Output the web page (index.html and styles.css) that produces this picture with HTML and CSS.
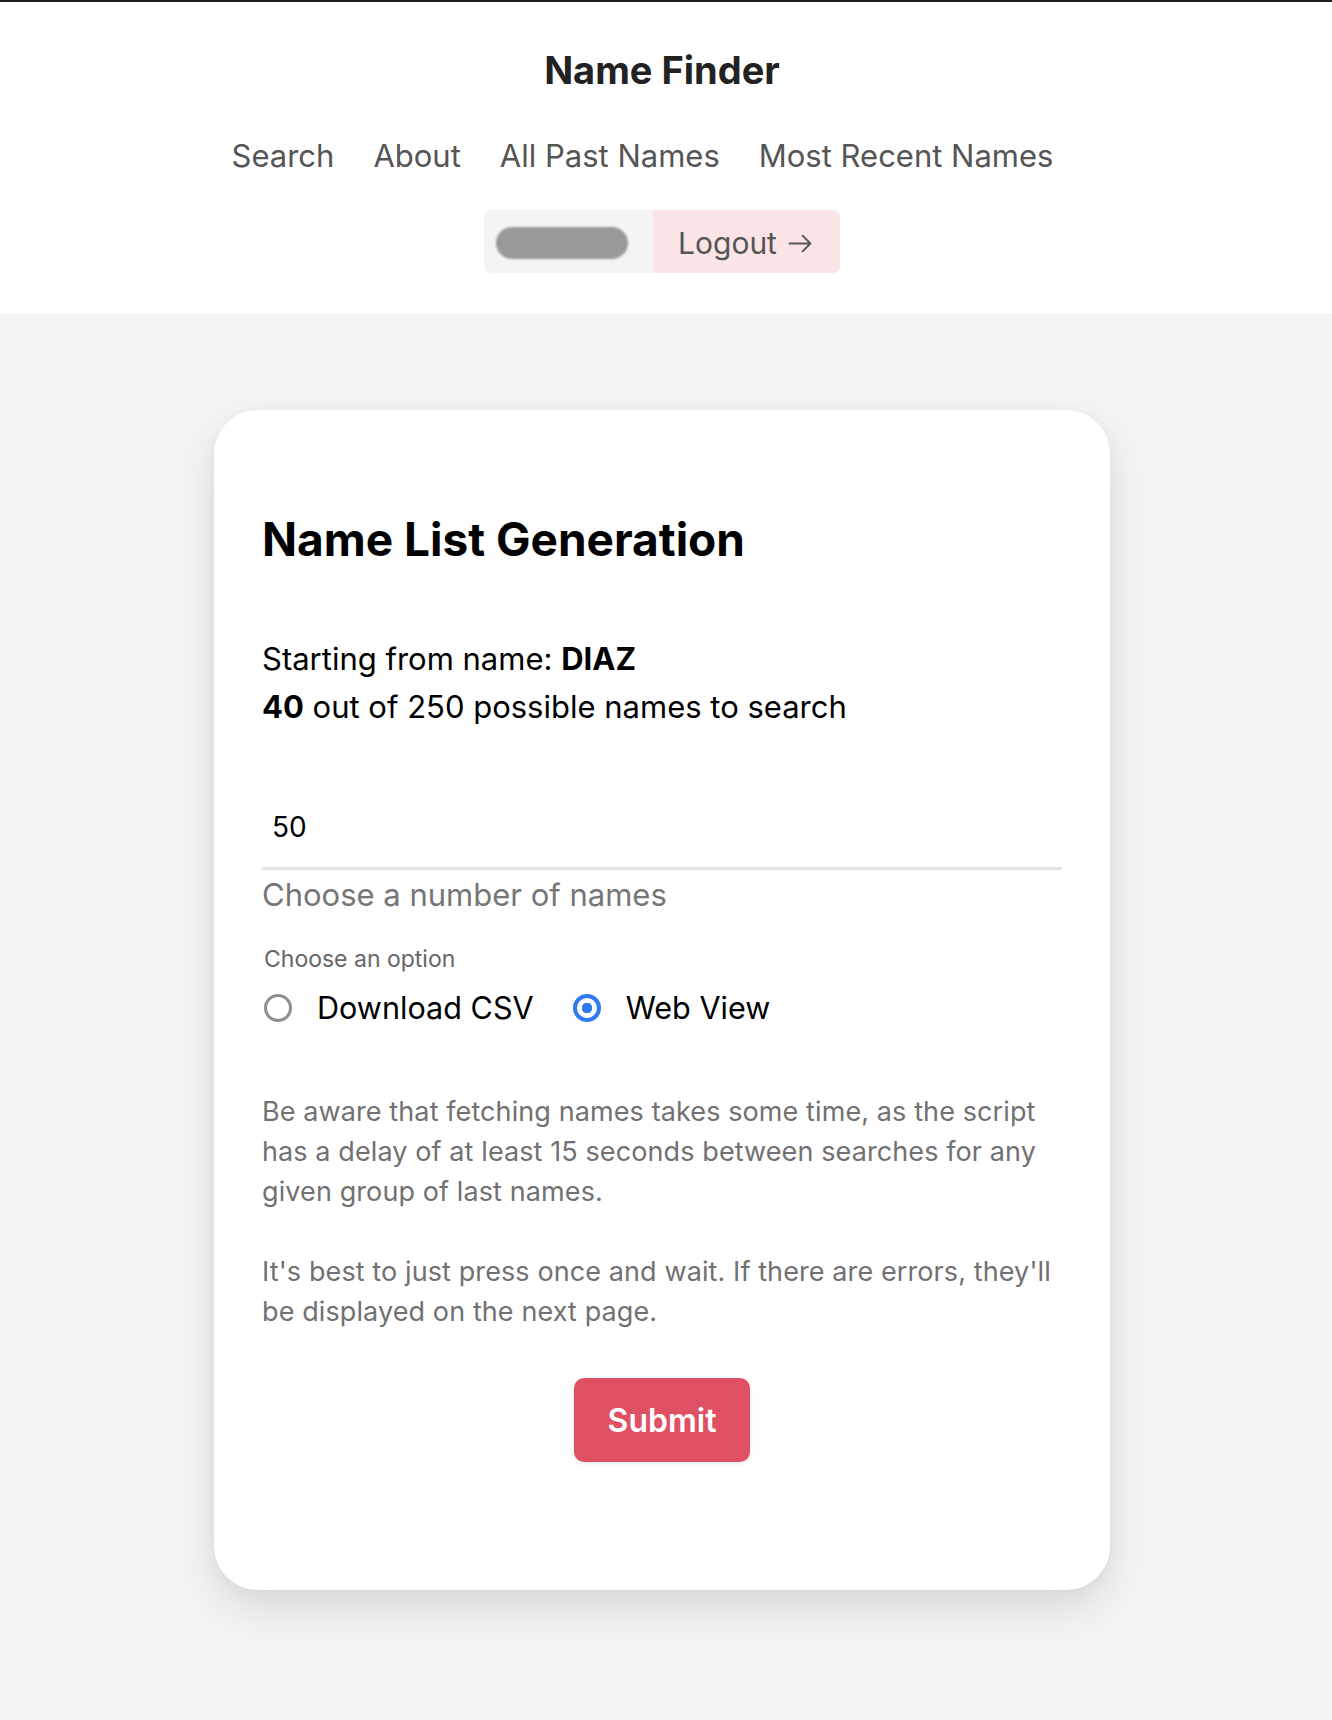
FILE: index.html
```html
<!DOCTYPE html>
<html lang="en">
<head>
<meta charset="utf-8">
<title>Name Finder</title>
<link rel="stylesheet" href="styles.css">
</head>
<body>
<header class="site-header">
  <h1 class="brand">Name Finder</h1>
  <nav class="nav">
    <a class="nav-link" href="#">Search</a>
    <a class="nav-link" href="#">About</a>
    <a class="nav-link" href="#">All Past Names</a>
    <a class="nav-link" href="#">Most Recent Names</a>
  </nav>
  <div class="account">
    <span class="user"><span class="user-name"></span></span>
    <a class="logout" href="#">Logout
      <svg class="logout-icon" viewBox="0 0 24 24" width="24" height="24" aria-hidden="true"><path d="M1.5 12h20M14 4.5l7.5 7.5-7.5 7.5" fill="none" stroke="#555" stroke-width="1.8" stroke-linecap="round" stroke-linejoin="round"/></svg>
    </a>
  </div>
</header>
<main class="main">
  <section class="card">
    <h2 class="card-title">Name List Generation</h2>
    <p class="stats">Starting from name: <strong>DIAZ</strong><br><strong>40</strong> out of 250 possible names to search</p>
    <div class="field">
      <input class="field-input" type="text" value="50" id="count">
      <label class="field-label" for="count">Choose a number of names</label>
    </div>
    <div class="options">
      <div class="options-legend">Choose an option</div>
      <div class="options-row">
        <label class="option"><input class="radio" type="radio" name="mode"><span>Download CSV</span></label>
        <label class="option"><input class="radio" type="radio" name="mode" checked><span>Web View</span></label>
      </div>
    </div>
    <p class="note note-first">Be aware that fetching names takes some time, as the script has a delay of at least 15 seconds between searches for any given group of last names.</p>
    <p class="note note-second">It's best to just press once and wait. If there are errors, they'll be displayed on the next page.</p>
    <div class="actions"><button class="submit" type="button">Submit</button></div>
  </section>
</main>
</body>
</html>
```

FILE: styles.css
```css
html, body {
  margin: 0;
  padding: 0;
}
body {
  background: #f4f4f4;
  font-family: Inter, "Noto Sans", "Liberation Sans", sans-serif;
  padding-right: 8px;
  min-height: 1720px;
  box-sizing: border-box;
}
.site-header {
  background: #fff;
  border-top: 2px solid #1f1f1f;
  padding: 45px 8px 41px 0;
  margin-right: -8px;
  display: flex;
  flex-direction: column;
  align-items: center;
}
.brand {
  margin: 0;
  font-size: 38px;
  line-height: 46px;
  font-weight: 700;
  color: #222;
}
.nav {
  display: flex;
  justify-content: center;
  margin-top: 44px;
}
.nav-link {
  font-size: 31px;
  line-height: 38px;
  color: #555;
  text-decoration: none;
  margin-right: 39px;
}
.account {
  display: flex;
  margin-top: 35px;
}
.user {
  background: #f4f4f4;
  border-radius: 7px 0 0 7px;
  padding: 17px 25px 14px 12px;
  display: flex;
}
.user-name {
  display: block;
  width: 132px;
  height: 32px;
  border-radius: 16px;
  background: #999;
  filter: blur(0.8px);
}
.logout {
  background: #fae4e6;
  border-radius: 0 7px 7px 0;
  padding: 15px 27px 12px 25px;
  font-size: 30px;
  line-height: 36px;
  color: #555;
  text-decoration: none;
  display: flex;
  align-items: center;
}
.logout-icon {
  margin-left: 11px;
  width: 25px;
  height: 25px;
  margin-top: 1px;
}
.main {
  padding-top: 96px;
  display: flex;
  justify-content: center;
}
.card {
  width: 896px;
  box-sizing: border-box;
  background: #fff;
  border-radius: 44px;
  padding: 48px;
  box-shadow: 0 18px 40px rgba(0, 0, 0, 0.11), 0 2px 14px rgba(0, 0, 0, 0.04);
}
.card-title {
  margin: 55px 0 0;
  font-size: 46px;
  line-height: 53px;
  font-weight: 700;
  color: #000;
}
.stats {
  margin: 69px 0 0;
  font-size: 31px;
  line-height: 48px;
  color: #000;
}
.stats strong {
  font-weight: 700;
}
.field {
  margin-top: 69px;
  display: flex;
  flex-direction: column;
}
.field-input {
  appearance: none;
  border: none;
  border-bottom: 3px solid #e4e4e4;
  outline: none;
  background: transparent;
  font-family: inherit;
  font-size: 28px;
  line-height: 34px;
  height: 70px;
  box-sizing: border-box;
  padding: 10px 10px 23px;
  color: #000;
  width: 100%;
  margin: 0;
}
.field-label {
  margin-top: 7px;
  font-size: 31px;
  line-height: 36px;
  color: #767676;
}
.options {
  margin-top: 33px;
}
.options-legend {
  font-size: 23px;
  line-height: 26px;
  color: #666;
  padding-left: 2px;
}
.options-row {
  display: flex;
  margin-top: 18px;
  gap: 39px;
}
.option {
  display: flex;
  align-items: center;
  font-size: 30.6px;
  line-height: 36px;
  color: #000;
}
.radio {
  appearance: none;
  margin: 0 25px 0 2px;
  width: 28px;
  height: 28px;
  border-radius: 50%;
  border: 3px solid #8e8e93;
  background: #fff;
  box-sizing: border-box;
  flex-shrink: 0;
}
.radio:checked {
  border: 4px solid #2f7bf5;
  background: radial-gradient(circle, #2f7bf5 0 5px, #fff 5.5px);
  margin-left: 0;
}
.note {
  font-size: 27px;
  line-height: 40px;
  letter-spacing: 0.1px;
  color: #717171;
  margin: 0;
}
.note-first {
  margin-top: 66px;
}
.note-second {
  margin-top: 40px;
}
.actions {
  margin-top: 46px;
  margin-bottom: 80px;
  display: flex;
  justify-content: center;
}
.submit {
  appearance: none;
  border: none;
  background: #e05064;
  color: #fff;
  font-family: inherit;
  font-size: 32px;
  font-weight: 600;
  height: 84px;
  padding: 0 34px;
  border-radius: 10px;
  box-shadow: 0 2px 4px rgba(0, 0, 0, 0.08);
}
```
